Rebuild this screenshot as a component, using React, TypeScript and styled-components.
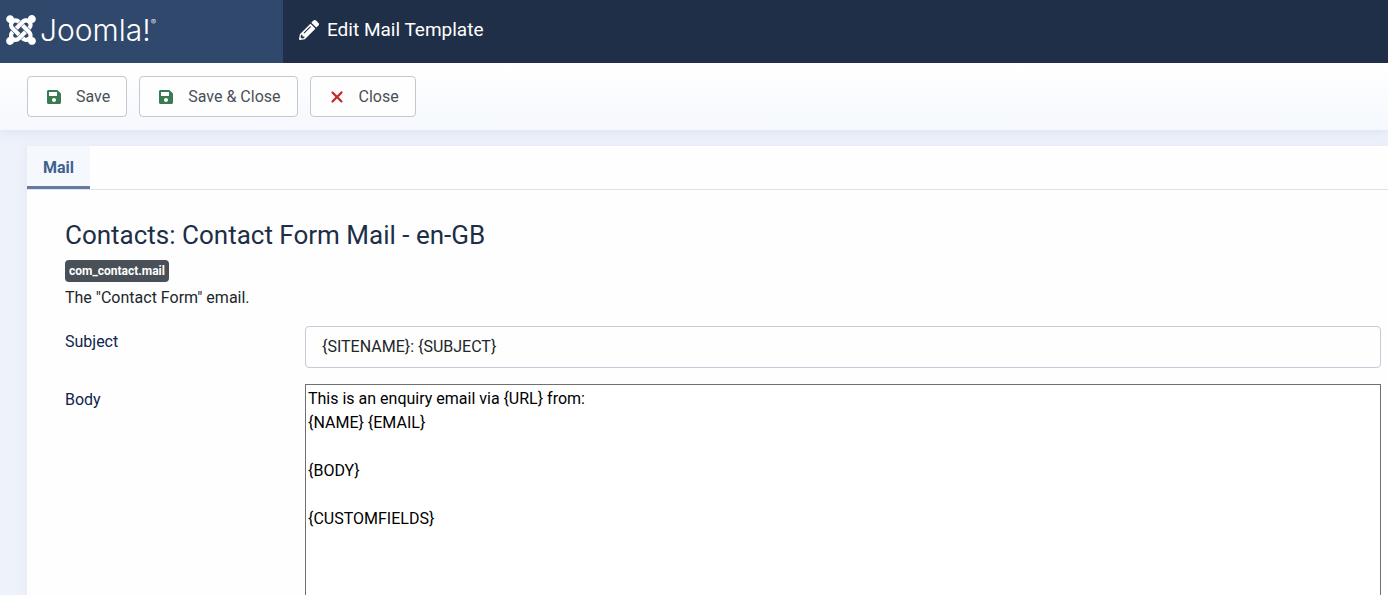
import React from 'react';
import styled, { createGlobalStyle } from 'styled-components';
import { FaJoomla, FaPencilAlt, FaSave } from 'react-icons/fa';
import { FaXmark } from 'react-icons/fa6';

const GlobalStyle = createGlobalStyle`
  *, *::before, *::after { box-sizing: border-box; }
  body {
    margin: 0;
    background: #eef2fa;
    color: #22262a;
    font-family: Roboto, "Liberation Sans", sans-serif;
    font-size: 16px;
    line-height: 24px;
  }
`;

const Page = styled.div`
  display: flex;
  flex-direction: column;
  height: 100vh;
  overflow: hidden;
`;

const Header = styled.header`
  position: relative;
  z-index: 1;
  display: flex;
  flex: none;
  height: 63px;
  background: #1f2f47;
  color: #fff;
`;

const Brand = styled.a`
  display: flex;
  align-items: center;
  gap: 2px;
  width: 283px;
  padding: 0 4px 3px;
  background: #30486c;
  color: #fff;
  text-decoration: none;
`;

const Wordmark = styled.span`
  display: flex;
  align-items: center;
  font-family: Inter, sans-serif;
  font-size: 30px;
  font-weight: 300;
  line-height: 32px;
`;

const Registered = styled.sup`
  align-self: flex-start;
  font-size: 8px;
  line-height: 16px;
`;

const PageTitle = styled.h1`
  display: flex;
  align-items: center;
  gap: 8px;
  margin: 0;
  padding: 0 16px 4px;
  font-size: 19px;
  font-weight: 400;
`;

const Toolbar = styled.div`
  position: relative;
  display: flex;
  flex: none;
  gap: 12px;
  padding: 13px 27px;
  background: linear-gradient(#fff, #f5f8fd);
  box-shadow: 0 2px 12px #d9e2f1;
`;

const ToolButton = styled.button<{ $tone: string }>`
  display: flex;
  align-items: center;
  gap: 14px;
  height: 41px;
  padding: 0 16px 0 18px;
  border: 1px solid #c3c9d0;
  border-radius: 4px;
  background: #fefefe;
  color: #495057;
  font: inherit;
  cursor: pointer;

  svg {
    width: 16px;
    color: ${({ $tone }) => $tone};
  }
`;

const Panel = styled.main`
  flex: 1;
  min-height: 0;
  margin: 16px 0 0 27px;
  background: #fefefe;
  box-shadow: 0 2px 10px #dfe6f4;
`;

const TabList = styled.div`
  display: flex;
  height: 44px;
  border-bottom: 1px solid #dfe3e7;
`;

const Tab = styled.button`
  padding: 4px 16px 0;
  border: 0;
  border-bottom: 3px solid #647aa3;
  background: #f5f8fc;
  color: #40608f;
  font: inherit;
  font-weight: 700;
  cursor: pointer;
`;

const TabPanel = styled.section`
  padding: 29px 7px 0 38px;
`;

const Heading = styled.h2`
  margin: 0 0 9px;
  color: #1d2e46;
  font-size: 26px;
  font-weight: 400;
  line-height: 32px;
`;

const Badge = styled.span`
  display: block;
  width: fit-content;
  padding: 0 4px;
  border-radius: 4px;
  background: #495057;
  color: #fff;
  font-size: 12px;
  font-weight: 700;
  line-height: 22px;
`;

const Description = styled.p`
  margin: 4px 0 16px;
`;

const Field = styled.div`
  display: grid;
  grid-template-columns: 240px 1fr;
  align-items: start;
  margin-bottom: 16px;
`;

const Label = styled.label`
  padding-top: 4px;
  color: #0f2350;
`;

const TextInput = styled.input`
  width: 100%;
  height: 42px;
  padding: 0 16px 2px;
  border: 1px solid #c6cad8;
  border-radius: 4px;
  background: #fefefe;
  color: #22262a;
  font: inherit;
`;

const TextArea = styled.textarea`
  display: block;
  width: 100%;
  padding: 2px;
  border: 1px solid #707070;
  background: #fff;
  color: #000;
  font: inherit;
  resize: none;
`;

const bodyText = `This is an enquiry email via {URL} from:
{NAME} {EMAIL}

{BODY}

{CUSTOMFIELDS}`;

const actions = [
  { label: 'Save', Icon: FaSave, size: 16, tone: '#3c7a52' },
  { label: 'Save & Close', Icon: FaSave, size: 16, tone: '#3c7a52' },
  { label: 'Close', Icon: FaXmark, size: 18, tone: '#c52827' },
];

export default function App() {
  return (
    <Page>
      <GlobalStyle />
      <Header>
        <Brand href="#">
          <FaJoomla size={34} />
          <Wordmark>
            Joomla!<Registered>®</Registered>
          </Wordmark>
        </Brand>
        <PageTitle>
          <FaPencilAlt size={20} />
          Edit Mail Template
        </PageTitle>
      </Header>
      <Toolbar role="toolbar" aria-label="Actions">
        {actions.map(({ label, Icon, size, tone }) => (
          <ToolButton key={label} type="button" $tone={tone}>
            <Icon size={size} />
            {label}
          </ToolButton>
        ))}
      </Toolbar>
      <Panel>
        <TabList role="tablist">
          <Tab type="button" role="tab" id="tab-mail" aria-selected="true" aria-controls="panel-mail">
            Mail
          </Tab>
        </TabList>
        <TabPanel role="tabpanel" id="panel-mail" aria-labelledby="tab-mail">
          <Heading>Contacts: Contact Form Mail - en-GB</Heading>
          <Badge>com_contact.mail</Badge>
          <Description>The "Contact Form" email.</Description>
          <Field>
            <Label htmlFor="subject">Subject</Label>
            <TextInput id="subject" type="text" defaultValue="{SITENAME}: {SUBJECT}" />
          </Field>
          <Field>
            <Label htmlFor="body">Body</Label>
            <TextArea id="body" rows={15} defaultValue={bodyText} />
          </Field>
        </TabPanel>
      </Panel>
    </Page>
  );
}
